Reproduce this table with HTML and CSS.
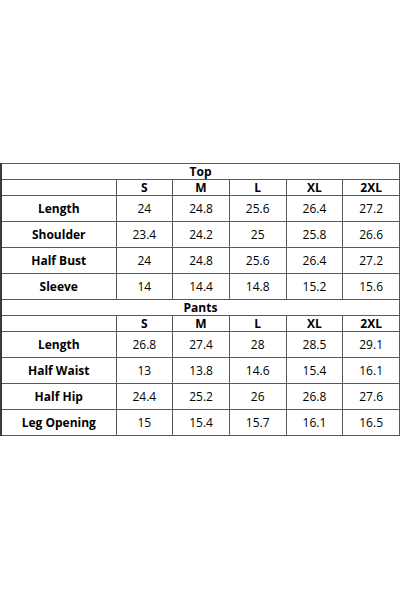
FILE: index.html
```html
<!DOCTYPE html>
<html>
<head>
<meta charset="utf-8">
<link rel="stylesheet" href="styles.css">
</head>
<body>
<div class="page">
<table class="sizes">
<colgroup><col class="c-label"><col><col><col><col><col></colgroup>
<tbody>
<tr class="title"><td colspan="6">Top</td></tr>
<tr class="head"><td></td><td>S</td><td>M</td><td>L</td><td>XL</td><td>2XL</td></tr>
<tr class="row"><th>Length</th><td>24</td><td>24.8</td><td>25.6</td><td>26.4</td><td>27.2</td></tr>
<tr class="row"><th>Shoulder</th><td>23.4</td><td>24.2</td><td>25</td><td>25.8</td><td>26.6</td></tr>
<tr class="row"><th>Half Bust</th><td>24</td><td>24.8</td><td>25.6</td><td>26.4</td><td>27.2</td></tr>
<tr class="row"><th>Sleeve</th><td>14</td><td>14.4</td><td>14.8</td><td>15.2</td><td>15.6</td></tr>
<tr class="title"><td colspan="6">Pants</td></tr>
<tr class="head"><td></td><td>S</td><td>M</td><td>L</td><td>XL</td><td>2XL</td></tr>
<tr class="row"><th>Length</th><td>26.8</td><td>27.4</td><td>28</td><td>28.5</td><td>29.1</td></tr>
<tr class="row"><th>Half Waist</th><td>13</td><td>13.8</td><td>14.6</td><td>15.4</td><td>16.1</td></tr>
<tr class="row"><th>Half Hip</th><td>24.4</td><td>25.2</td><td>26</td><td>26.8</td><td>27.6</td></tr>
<tr class="row"><th>Leg Opening</th><td>15</td><td>15.4</td><td>15.7</td><td>16.1</td><td>16.5</td></tr>
</tbody>
</table>
</div>
</body>
</html>
```

FILE: styles.css
```css
html, body {
  margin: 0;
  padding: 0;
  background: #ffffff;
}
.page {
  width: 400px;
  height: 600px;
  padding-top: 163px;
  box-sizing: border-box;
}
.sizes {
  width: 400px;
  border-collapse: collapse;
  table-layout: fixed;
  font-family: "Open Sans", "Liberation Sans", sans-serif;
  font-size: 12px;
  color: #000000;
  border: 1px solid #3a3a3a;
  border-left-width: 2px;
}
.c-label {
  width: 115px;
}
.sizes td, .sizes th {
  border: 1px solid #5a5a5a;
  padding: 0;
  text-align: center;
  vertical-align: middle;
  line-height: 14px;
}
.sizes th {
  font-weight: 700;
}
.title td {
  font-weight: 700;
  height: 15px;
}
.head td {
  font-weight: 700;
  height: 15px;
}
.row th, .row td {
  height: 25px;
}
```
